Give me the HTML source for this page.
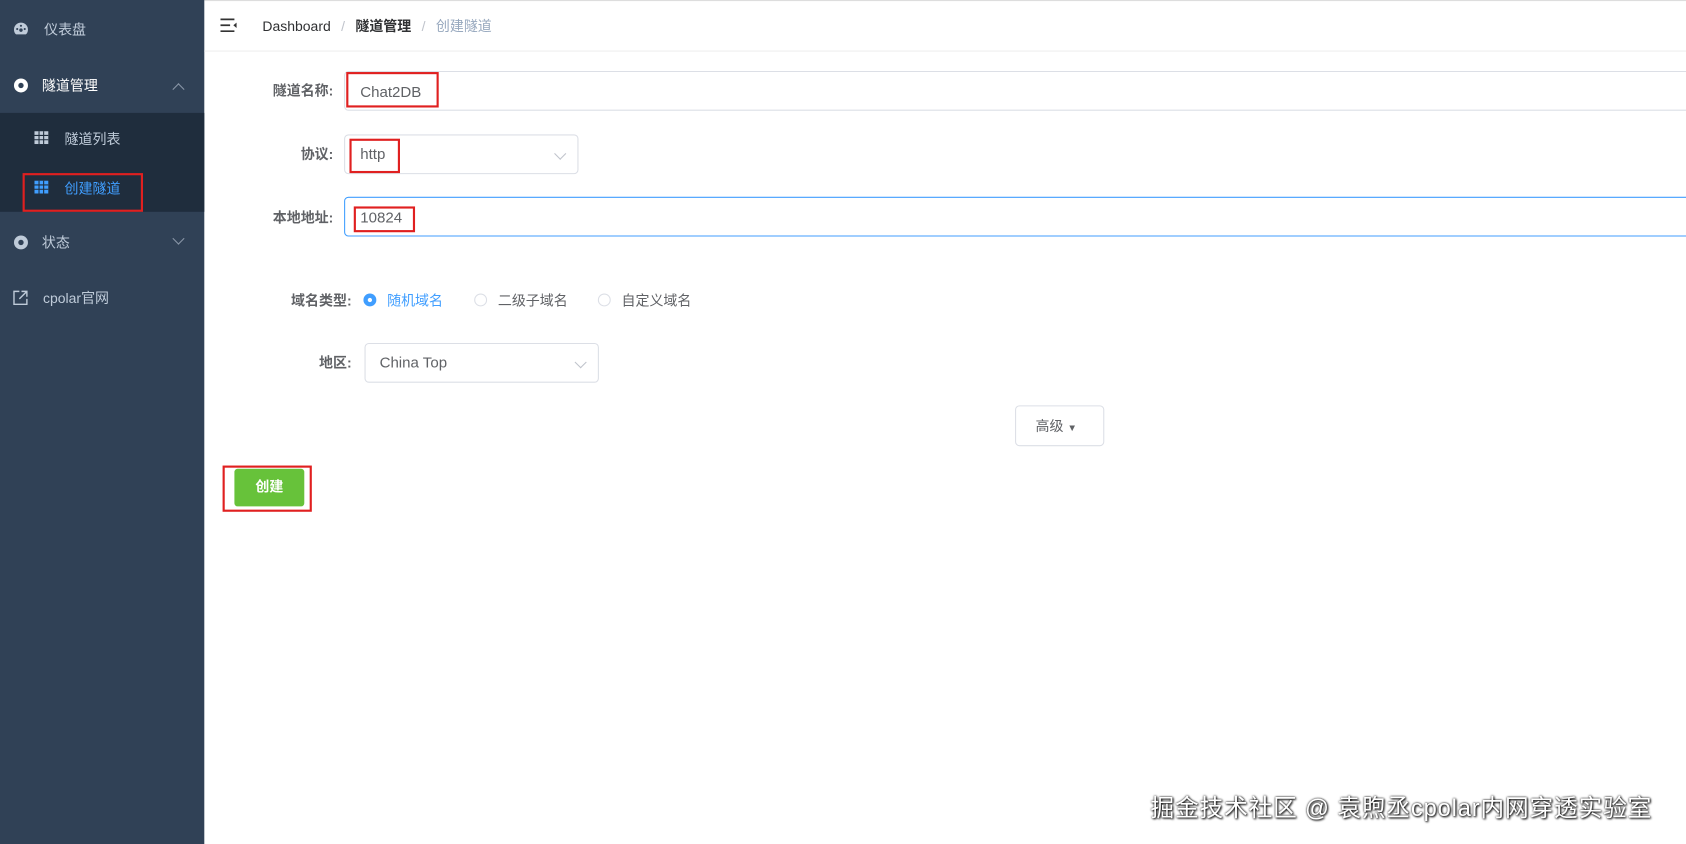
<!DOCTYPE html>
<html><head><meta charset="utf-8"><style>
html,body{margin:0;padding:0;width:1686px;height:844px;overflow:hidden;background:#fff}
#w{position:absolute;left:0;top:0;width:1568px;height:785px;transform:scale(1.07526,1.07516);transform-origin:0 0;font-family:"Liberation Sans","Noto Sans CJK SC",sans-serif;font-size:13px;color:#606266}
.a{position:absolute}
#sb{left:0;top:0;width:190px;height:785px;background:#304156}
#sub{left:0;top:105px;width:190px;height:92px;background:#1f2d3d}
.mi{position:absolute;color:#bfcbd9;font-size:13px;white-space:nowrap}
.rb{position:absolute;border:2px solid #e02020;box-sizing:border-box}
.lbl{position:absolute;font-weight:bold;color:#606266;text-align:right;white-space:nowrap}
.inp{position:absolute;border:1px solid #dcdfe6;border-radius:4px;box-sizing:border-box;background:#fff}
.chev{position:absolute;width:7px;height:7px;border-right:1px solid #c0c4cc;border-bottom:1px solid #c0c4cc;transform:rotate(45deg)}
.rad{position:absolute;width:12px;height:12px;border:1px solid #dcdfe6;border-radius:50%;box-sizing:border-box;background:#fff}
</style></head><body><div id="w">
<div class="a" style="left:190px;top:0;width:1378px;height:1px;background:#ddd"></div>
<div id="sb" class="a"></div>
<div id="sub" class="a"></div>
<svg class="a" style="left:12px;top:20px" width="15" height="14" viewBox="0 0 15 14"><path d="M7.5 1A6.5 6.5 0 0 0 1 7.5c0 2 .8 3.6 2 4.5h9c1.2-.9 2-2.5 2-4.5A6.5 6.5 0 0 0 7.5 1z" fill="#bfcbd9"/><circle cx="7.5" cy="8" r="1.6" fill="#304156"/><circle cx="4" cy="7" r="1" fill="#304156"/><circle cx="11" cy="7" r="1" fill="#304156"/><circle cx="7.5" cy="4" r="1" fill="#304156"/></svg>
<div class="mi" style="left:41px;top:17px">仪表盘</div>
<svg class="a" style="left:12px;top:72px" width="15" height="15" viewBox="0 0 15 15"><circle cx="7.5" cy="7.5" r="6.5" fill="#fff"/><circle cx="7.5" cy="7.5" r="2.5" fill="#304156"/></svg>
<div class="mi" style="left:39px;top:69px;color:#fff">隧道管理</div>
<div class="chev" style="left:162px;top:79px;transform:rotate(225deg);border-color:#8a97a8"></div>
<svg class="a" style="left:32px;top:122px" width="13" height="12"><rect width="13" height="12" fill="#bfcbd9"/><path d="M0 4h13M0 8h13M4.3 0v12M8.6 0v12" stroke="#1f2d3d" stroke-width="1"/></svg>
<div class="mi" style="left:60px;top:119px">隧道列表</div>
<svg class="a" style="left:32px;top:168px" width="13" height="12"><rect width="13" height="12" fill="#409eff"/><path d="M0 4h13M0 8h13M4.3 0v12M8.6 0v12" stroke="#1f2d3d" stroke-width="1"/></svg>
<div class="mi" style="left:60px;top:165px;color:#409eff">创建隧道</div>
<div class="rb" style="left:21px;top:161px;width:112px;height:36px"></div>
<svg class="a" style="left:12px;top:218px" width="15" height="15" viewBox="0 0 15 15"><circle cx="7.5" cy="7.5" r="6.5" fill="#bfcbd9"/><circle cx="7.5" cy="7.5" r="2.5" fill="#304156"/></svg>
<div class="mi" style="left:39px;top:215px">状态</div>
<div class="chev" style="left:162px;top:218px;border-color:#8a97a8"></div>
<svg class="a" style="left:12px;top:270px" width="14" height="14" viewBox="0 0 14 14" fill="none" stroke="#bfcbd9" stroke-width="1.3"><path d="M6 1H1v12h12V8M8 1h5v5M13 1L6 8"/></svg>
<div class="mi" style="left:40px;top:267px">cpolar官网</div>
<div class="a" style="left:190px;top:47px;width:1378px;height:1px;background:#eee"></div>
<svg class="a" style="left:205px;top:17px" width="16" height="13" viewBox="0 0 16 13"><path d="M0 1h13M0 6.5h9M0 12h13" stroke="#333" stroke-width="1.6"/><path d="M15 4l-3 2.5 3 2.5z" fill="#333"/></svg>
<div class="a" style="left:244px;top:14px;font-size:13px;color:#303133;white-space:nowrap">Dashboard <span style="color:#c0c4cc;margin:0 6px">/</span> <span style="font-weight:bold">隧道管理</span> <span style="color:#c0c4cc;margin:0 6px">/</span> <span style="color:#97a8be">创建隧道</span></div>
<div class="lbl" style="left:230px;top:74px;width:80px">隧道名称:</div>
<div class="inp" style="left:320px;top:66px;width:1260px;height:37px"></div>
<div class="a" style="left:335px;top:77px;color:#606266;font-size:14px">Chat2DB</div>
<div class="rb" style="left:322px;top:67px;width:86px;height:33px"></div>
<div class="lbl" style="left:230px;top:133px;width:80px">协议:</div>
<div class="inp" style="left:320px;top:125px;width:218px;height:37px"></div>
<div class="chev" style="left:517px;top:139px"></div>
<div class="a" style="left:335px;top:135px;font-size:14px">http</div>
<div class="rb" style="left:325px;top:129px;width:47px;height:32px"></div>
<div class="lbl" style="left:230px;top:192px;width:80px">本地地址:</div>
<div class="inp" style="left:320px;top:183px;width:1260px;height:37px;border-color:#409eff"></div>
<div class="a" style="left:335px;top:194px;font-size:14px">10824</div>
<div class="rb" style="left:329px;top:192px;width:57px;height:24px"></div>
<div class="lbl" style="left:247px;top:269px;width:80px">域名类型:</div>
<div class="rad" style="left:338px;top:273px;border:4px solid #409eff"></div>
<div class="a" style="left:360px;top:269px;color:#409eff">随机域名</div>
<div class="rad" style="left:441px;top:273px"></div>
<div class="a" style="left:463px;top:269px">二级子域名</div>
<div class="rad" style="left:556px;top:273px"></div>
<div class="a" style="left:578px;top:269px">自定义域名</div>
<div class="lbl" style="left:247px;top:327px;width:80px">地区:</div>
<div class="inp" style="left:339px;top:319px;width:218px;height:37px"></div>
<div class="a" style="left:353px;top:329px;font-size:14px">China Top</div>
<div class="chev" style="left:536px;top:333px"></div>
<div class="inp" style="left:944px;top:377px;width:83px;height:38px"></div>
<div class="a" style="left:963px;top:386px;color:#606266">高级 <span style="font-size:9px">▼</span></div>
<div class="a" style="left:218px;top:436px;width:65px;height:35px;background:#67c23a;border-radius:3px;color:#fff;text-align:center;line-height:33px;font-weight:bold">创建</div>
<div class="rb" style="left:207px;top:433px;width:83px;height:43px"></div>
<div class="a" style="left:1070px;top:734px;font-size:22px;letter-spacing:0.8px;color:#fff;white-space:nowrap;text-shadow:0 0 2px #000,1px 1px 2px #000">掘金技术社区 @ 袁煦丞cpolar内网穿透实验室</div>
</div></body></html>
